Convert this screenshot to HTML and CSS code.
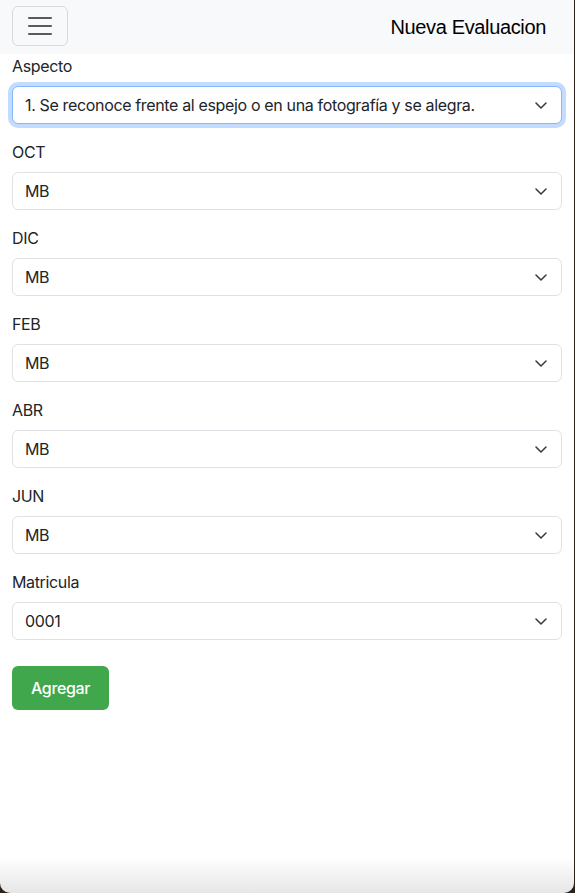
FILE: index.html
```html
<!DOCTYPE html>
<html lang="es">
<head>
<meta charset="utf-8">
<title>Nueva Evaluacion</title>
<link rel="stylesheet" href="styles.css">
</head>
<body>
<div class="page">
  <nav class="navbar">
    <button class="toggler" type="button" aria-label="Menu">
      <svg class="toggler-icon" viewBox="0 0 30 30" width="30" height="30"><path d="M4 7h22M4 15h22M4 23h22" stroke="rgba(33,37,41,0.75)" stroke-width="2" stroke-linecap="round" stroke-miterlimit="10" fill="none"/></svg>
    </button>
    <span class="brand">Nueva Evaluacion</span>
  </nav>
  <form class="form">
    <div class="group">
      <label class="label">Aspecto</label>
      <div class="select focus"><span class="value">1. Se reconoce frente al espejo o en una fotografía y se alegra.</span><svg class="chev" viewBox="0 0 12 7"><path d="M1 1l5 5 5-5" fill="none" stroke="#343a40" stroke-width="1.5" stroke-linecap="round" stroke-linejoin="round"/></svg></div>
    </div>
    <div class="group">
      <label class="label">OCT</label>
      <div class="select"><span class="value">MB</span><svg class="chev" viewBox="0 0 12 7"><path d="M1 1l5 5 5-5" fill="none" stroke="#343a40" stroke-width="1.5" stroke-linecap="round" stroke-linejoin="round"/></svg></div>
    </div>
    <div class="group">
      <label class="label">DIC</label>
      <div class="select"><span class="value">MB</span><svg class="chev" viewBox="0 0 12 7"><path d="M1 1l5 5 5-5" fill="none" stroke="#343a40" stroke-width="1.5" stroke-linecap="round" stroke-linejoin="round"/></svg></div>
    </div>
    <div class="group">
      <label class="label">FEB</label>
      <div class="select"><span class="value">MB</span><svg class="chev" viewBox="0 0 12 7"><path d="M1 1l5 5 5-5" fill="none" stroke="#343a40" stroke-width="1.5" stroke-linecap="round" stroke-linejoin="round"/></svg></div>
    </div>
    <div class="group">
      <label class="label">ABR</label>
      <div class="select"><span class="value">MB</span><svg class="chev" viewBox="0 0 12 7"><path d="M1 1l5 5 5-5" fill="none" stroke="#343a40" stroke-width="1.5" stroke-linecap="round" stroke-linejoin="round"/></svg></div>
    </div>
    <div class="group">
      <label class="label">JUN</label>
      <div class="select"><span class="value">MB</span><svg class="chev" viewBox="0 0 12 7"><path d="M1 1l5 5 5-5" fill="none" stroke="#343a40" stroke-width="1.5" stroke-linecap="round" stroke-linejoin="round"/></svg></div>
    </div>
    <div class="group">
      <label class="label">Matricula</label>
      <div class="select"><span class="value">0001</span><svg class="chev" viewBox="0 0 12 7"><path d="M1 1l5 5 5-5" fill="none" stroke="#343a40" stroke-width="1.5" stroke-linecap="round" stroke-linejoin="round"/></svg></div>
    </div>
    <button class="btn" type="button">Agregar</button>
  </form>
</div>
</body>
</html>
```
FILE: styles.css
```css
html {
  background: #2b2118;
}
body {
  margin: 0;
  width: 574px;
  min-height: 893px;
  box-sizing: border-box;
  border-radius: 0 0 10px 10px;
  background: linear-gradient(to bottom, #ffffff 0, #ffffff calc(100% - 36px), #e6e6e6 100%);
  font-family: "Inter", "Liberation Sans", sans-serif;
  font-size: 16px;
  line-height: 24px;
  letter-spacing: -0.35px;
  color: #212529;
}
.page {
  display: flex;
  flex-direction: column;
}
.navbar {
  background: #f8f9fa;
  height: 54px;
  box-sizing: border-box;
  padding: 6px 12px 0 12px;
  display: flex;
  justify-content: space-between;
  align-items: flex-start;
}
.toggler {
  width: 56px;
  height: 40px;
  box-sizing: border-box;
  border: 1px solid rgba(33, 37, 41, 0.15);
  border-radius: 6px;
  background: transparent;
  padding: 0;
  display: flex;
  align-items: center;
  justify-content: center;
}
.toggler-icon {
  display: block;
}
.brand {
  font-family: "Liberation Sans", Arial, sans-serif;
  font-size: 20px;
  line-height: 30px;
  letter-spacing: -0.35px;
  margin-top: 6px;
  margin-right: 16px;
  color: #000;
}
.form {
  padding: 0 12px;
  display: flex;
  flex-direction: column;
  align-items: flex-start;
}
.group {
  align-self: stretch;
  margin-bottom: 16px;
  display: flex;
  flex-direction: column;
}
.label {
  margin-bottom: 8px;
}
.select {
  height: 38px;
  box-sizing: border-box;
  border: 1px solid #dee2e6;
  border-radius: 6px;
  padding: 6px 14px 6px 12px;
  background: #fff;
  display: flex;
  align-items: center;
  justify-content: space-between;
  gap: 12px;
}
.value {
  white-space: nowrap;
  overflow: hidden;
}
.select.focus {
  border-color: #86b7fe;
  box-shadow: 0 0 0 4px rgba(13, 110, 253, 0.25);
}
.chev {
  flex: none;
  width: 12px;
  height: 7px;
}
.btn {
  margin-top: 10px;
  height: 44px;
  padding: 0 19px;
  border: 0;
  border-radius: 6px;
  background: #41a74d;
  color: #fff;
  font-family: "Inter", "Liberation Sans", sans-serif;
  font-size: 16px;
  font-weight: 500;
  letter-spacing: -0.35px;
}
```
